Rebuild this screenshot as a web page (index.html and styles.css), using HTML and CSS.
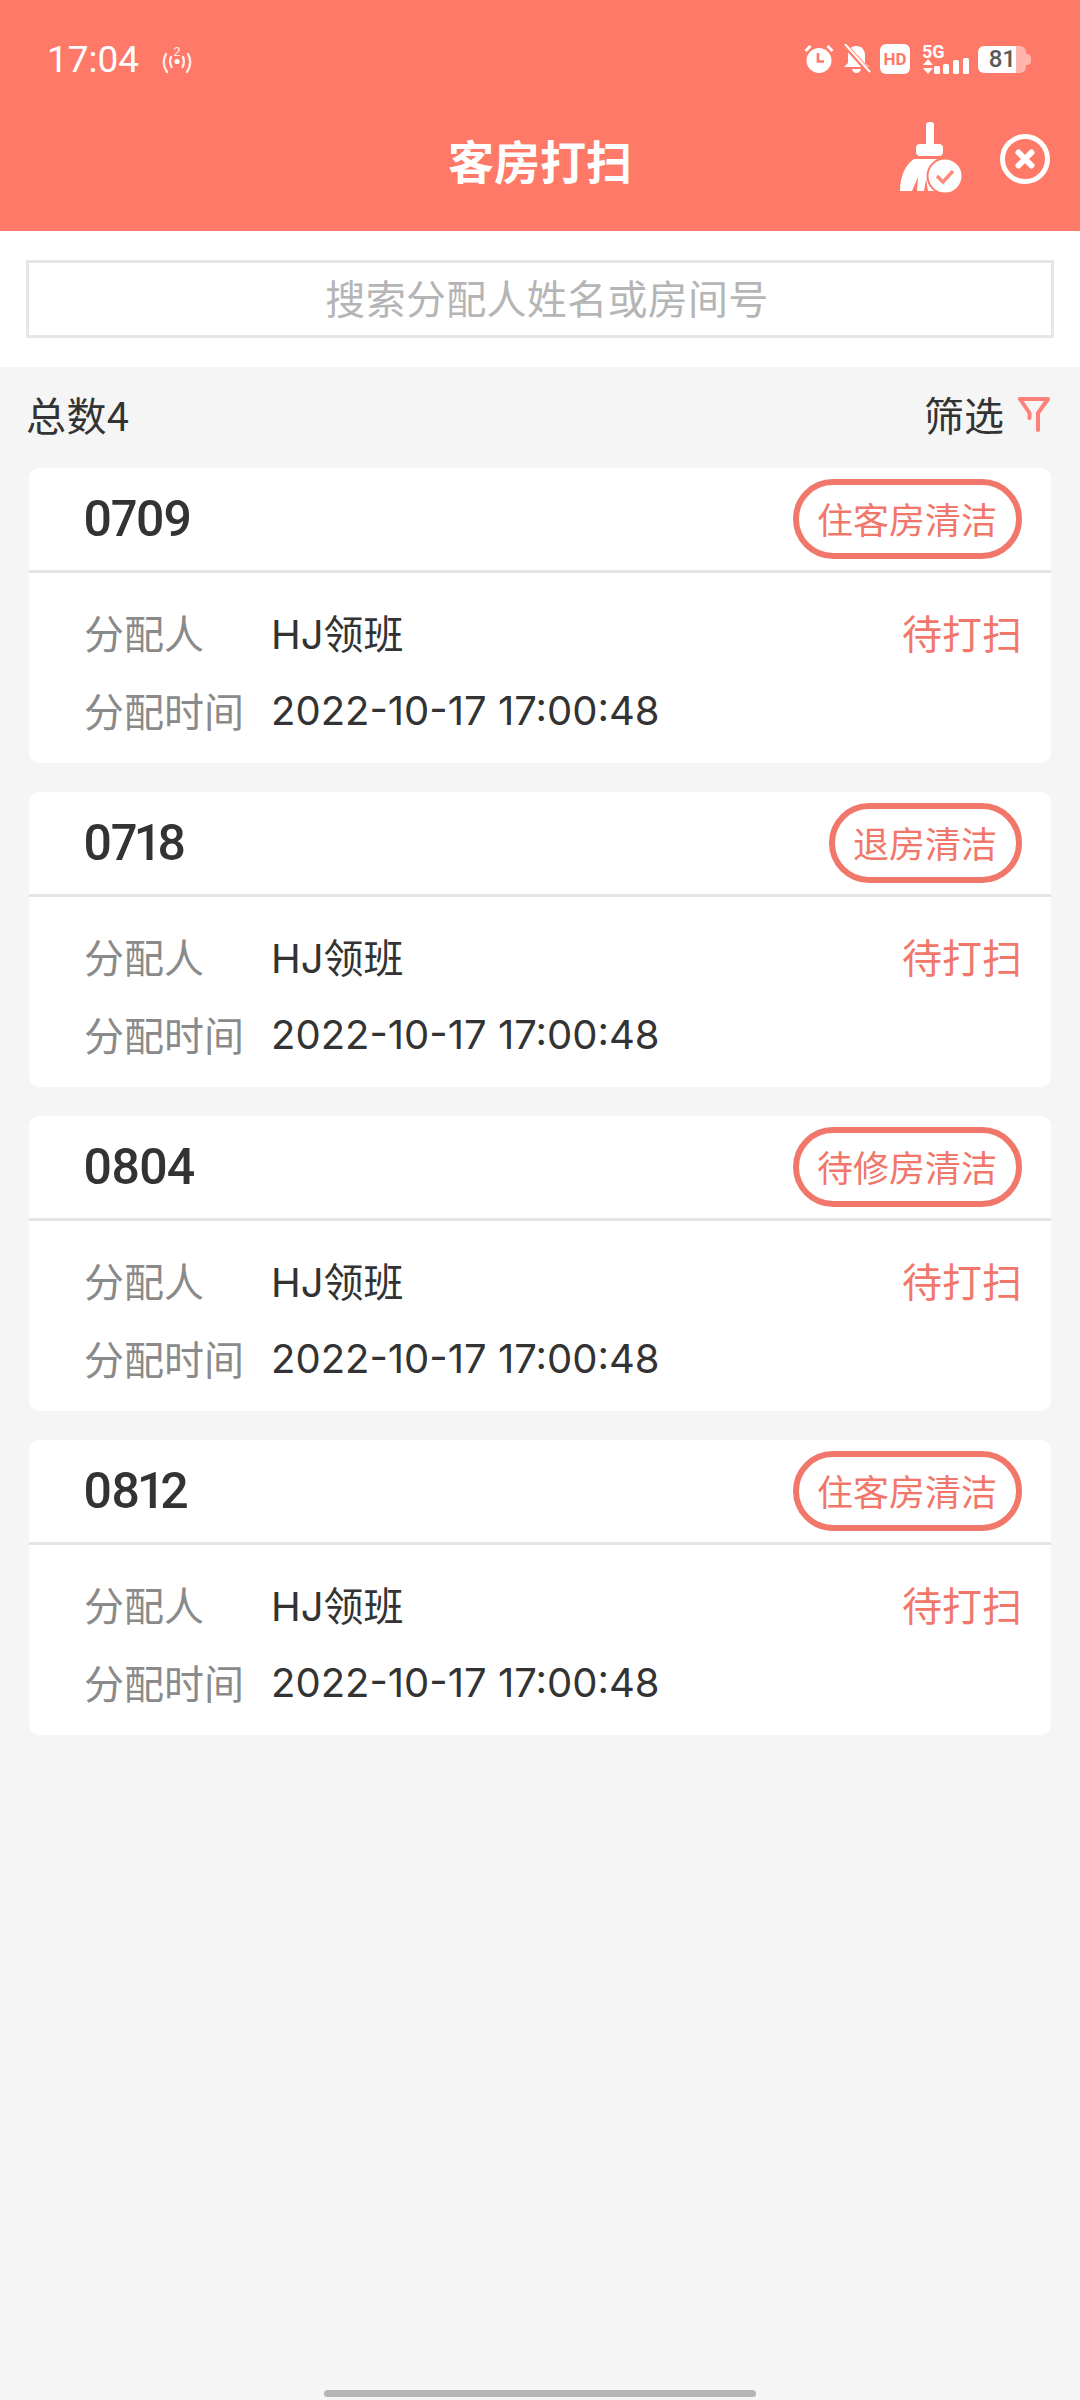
FILE: index.html
```html
<!DOCTYPE html>
<html lang="zh">
<head>
<meta charset="utf-8">
<title>客房打扫</title>
<link rel="stylesheet" href="styles.css">
</head>
<body>
<header class="top">
  <div class="status">
    <div class="status-left">
      <span class="time">17:04</span>
      <svg class="hotspot" width="32" height="30" viewBox="0 0 32 30"><g fill="none" stroke="#fff" stroke-width="2.400" stroke-linecap="round" opacity=".85"><path d="M5 10Q0 19 6 28"/><path d="M27 10Q32 19 26 28"/><path d="M10 13Q8 18 10.500 23"/><path d="M22 13Q24 18 21.500 23"/></g><circle cx="16" cy="17.500" r="2.600" fill="#fff"/><text x="16" y="12" class="hotspot-num">2</text></svg>
    </div>
    <div class="status-right">
      <svg width="30" height="30" viewBox="0 0 30 30"><circle cx="15" cy="16.500" r="12.500" fill="#fff"/><path d="M14 9v8.500h6" fill="none" stroke="#fe7967" stroke-width="2.600"/><path d="M1.500 7l5-5M28.500 7l-5-5" stroke="#fff" stroke-width="3"/></svg>
      <svg width="28" height="30" viewBox="0 0 28 30"><path d="M13 2c6 0 9 4 9 10v7l4 4H1l4-4v-7C5 6 8 2 13 2zM9 25h9q-1 4-4.500 4T9 25z" fill="#fff"/><path d="M1 0l26 29" stroke="#fe7967" stroke-width="5"/><path d="M2 0l25 28" stroke="#fff" stroke-width="2"/></svg>
      <span class="hd">HD</span>
      <svg class="net" width="47" height="34" viewBox="0 -4 47 34"><text x="0" y="14" class="five-g">5G</text><path d="M6 15l5 6H1zM6 30l-5-6h10z" fill="#fff"/><rect x="12" y="22" width="6" height="8" rx="1.500" fill="#fff"/><rect x="21" y="20" width="6" height="10" rx="1.500" fill="#fff"/><rect x="31" y="16" width="6" height="14" rx="1.500" fill="#fff"/><rect x="41" y="14" width="6" height="16" rx="1.500" fill="#fff"/></svg>
      <div class="battery"><span class="battery-num">81</span><i class="battery-cap"></i></div>
    </div>
  </div>
  <div class="nav">
    <h1 class="title">客房打扫</h1>
    <div class="nav-icons">
      <svg class="broom" width="64" height="72" viewBox="0 0 64 72"><rect x="26" y="0" width="8" height="24" rx="3" fill="#fff"/><rect x="16" y="22" width="27" height="12" rx="4" fill="#fff"/><path d="M14 37h22c2 0 3 1 2 3-3 4-5 9-5 14 0 6 1 11 3 15h-8l-2-12-2 12h-7l1-14-6 14H0c0-14 5-26 14-32z" fill="#fff"/><circle cx="45" cy="54" r="17.500" fill="#fff" stroke="#fe7967" stroke-width="2"/><path d="M37 54l6 6 10-11" fill="none" stroke="#fe8a7a" stroke-width="3.400"/></svg>
      <svg class="close" width="50" height="50" viewBox="0 0 50 50"><circle cx="25" cy="25" r="22.500" fill="none" stroke="#fff" stroke-width="5"/><path d="M18.500 18.500l13 13M31.500 18.500l-13 13" stroke="#fff" stroke-width="6" stroke-linecap="round"/></svg>
    </div>
  </div>
</header>
<section class="search"><div class="search-box">搜索分配人姓名或房间号</div></section>
<section class="summary">
  <span class="total">总数4</span>
  <div class="filter"><span>筛选</span><svg width="32" height="36" viewBox="0 0 32 36"><path d="M2 3H30L20 17V34" fill="none" stroke="#fe8078" stroke-width="4" stroke-linejoin="round" stroke-linecap="round"/><path d="M2 3L11.500 17V22" fill="none" stroke="#fe8078" stroke-width="4" stroke-linejoin="round" stroke-linecap="round"/></svg></div>
</section>
<main class="list">
  <article class="card">
    <div class="card-head"><span class="room">0709</span><span class="tag">住客房清洁</span></div>
    <div class="card-body">
      <div class="row"><span class="label">分配人</span><span class="value">HJ领班</span><span class="state">待打扫</span></div>
      <div class="row"><span class="label">分配时间</span><span class="value">2022-10-17 17:00:48</span></div>
    </div>
  </article>
  <article class="card">
    <div class="card-head"><span class="room">0718</span><span class="tag">退房清洁</span></div>
    <div class="card-body">
      <div class="row"><span class="label">分配人</span><span class="value">HJ领班</span><span class="state">待打扫</span></div>
      <div class="row"><span class="label">分配时间</span><span class="value">2022-10-17 17:00:48</span></div>
    </div>
  </article>
  <article class="card">
    <div class="card-head"><span class="room">0804</span><span class="tag">待修房清洁</span></div>
    <div class="card-body">
      <div class="row"><span class="label">分配人</span><span class="value">HJ领班</span><span class="state">待打扫</span></div>
      <div class="row"><span class="label">分配时间</span><span class="value">2022-10-17 17:00:48</span></div>
    </div>
  </article>
  <article class="card">
    <div class="card-head"><span class="room">0812</span><span class="tag">住客房清洁</span></div>
    <div class="card-body">
      <div class="row"><span class="label">分配人</span><span class="value">HJ领班</span><span class="state">待打扫</span></div>
      <div class="row"><span class="label">分配时间</span><span class="value">2022-10-17 17:00:48</span></div>
    </div>
  </article>
</main>
<div class="home-bar"></div>
</body>
</html>
```

FILE: styles.css
```css
* { box-sizing: border-box; }
html, body { margin: 0; padding: 0; }
body {
  width: 1080px;
  height: 2400px;
  background: #f5f5f5;
  font-family: "Noto Sans CJK SC", "Noto Sans", sans-serif;
  color: #333;
  position: relative;
  overflow: hidden;
}
.top { height: 231px; background: #fe7967; color: #fff; display: flex; flex-direction: column; }
.status { height: 117px; padding: 0 54px 0 47px; display: flex; justify-content: space-between; align-items: center; }
.status-left { display: flex; align-items: center; gap: 22px; }
.time { font-family: Roboto, sans-serif; font-size: 37px; line-height: 44px; margin-top: 2px; }
.hotspot-num { font-family: Roboto, sans-serif; font-size: 13px; fill: #fff; text-anchor: middle; opacity: .85; }
.status-right { display: flex; align-items: center; gap: 9px; }
.hd { width: 30px; height: 30px; border-radius: 6px; background: #fff; color: #fe7967; font: 700 17px/30px Roboto, sans-serif; text-align: center; }
.net { margin: -4px 0 0 3px; }
.five-g { font-family: Roboto, sans-serif; font-weight: 700; font-size: 18px; fill: #fff; }
.battery { position: relative; width: 48px; height: 27px; margin-top: 1px; border-radius: 6px; background: linear-gradient(90deg, #fff 0 79%, #ffb5ad 79% 100%); display: flex; align-items: center; justify-content: flex-end; padding-right: 10px; }
.battery-num { font: 500 24px/27px Roboto, sans-serif; color: #5a5a5a; }
.battery-cap { position: absolute; right: -5px; top: 8px; width: 5px; height: 11px; border-radius: 0 4px 4px 0; background: #ffb5ad; }
.nav { flex: 1; position: relative; display: flex; align-items: center; justify-content: center; }
.title { margin: 0; font-size: 46px; line-height: 60px; font-weight: 700; padding-bottom: 30px; }
.nav-icons { position: absolute; right: 30px; top: 5px; display: flex; align-items: flex-start; gap: 36px; }
.close { margin-top: 12px; }
.search { height: 136px; background: #fff; padding: 29px 26px 0; }
.search-box { height: 78px; border: 3px solid #e6e6e6; color: #b5b5b5; font-size: 40px; line-height: 68px; letter-spacing: .3px; text-align: center; padding-left: 14px; }
.summary { height: 101px; padding: 0 30px 8px 26px; display: flex; align-items: center; justify-content: space-between; font-size: 40px; color: #333; }
.total { letter-spacing: .5px; }
.filter { display: flex; align-items: center; gap: 14px; }
.list { padding: 0 29px; display: flex; flex-direction: column; gap: 29px; }
.card { height: 295px; background: #fff; border-radius: 10px; overflow: hidden; }
.card-head { height: 105px; border-bottom: 3px solid #e5e5e5; padding: 0 29px 0 54px; display: flex; align-items: center; justify-content: space-between; }
.room { font-family: Roboto, sans-serif; font-variant-numeric: proportional-nums; font-size: 50px; font-weight: 500; letter-spacing: -1.500px; color: #333; }
.tag { height: 80px; padding: 0 19px 0 18px; border: 6px solid #f0776a; border-radius: 40px; color: #f0776a; font-size: 36px; line-height: 66px; }
.card-body { padding: 20px 29px 0 55px; }
.row { display: flex; align-items: center; height: 78px; font-size: 40px; }
.label { width: 187px; color: #8a8a8a; }
.value { flex: 1; color: #333; font-family: Inter, "Noto Sans CJK SC", sans-serif; font-size: 40px; }
.state { color: #f0776a; }
.home-bar { position: absolute; left: 324px; top: 2390px; width: 432px; height: 7px; border-radius: 4px; background: #b5b5b5; }
```
